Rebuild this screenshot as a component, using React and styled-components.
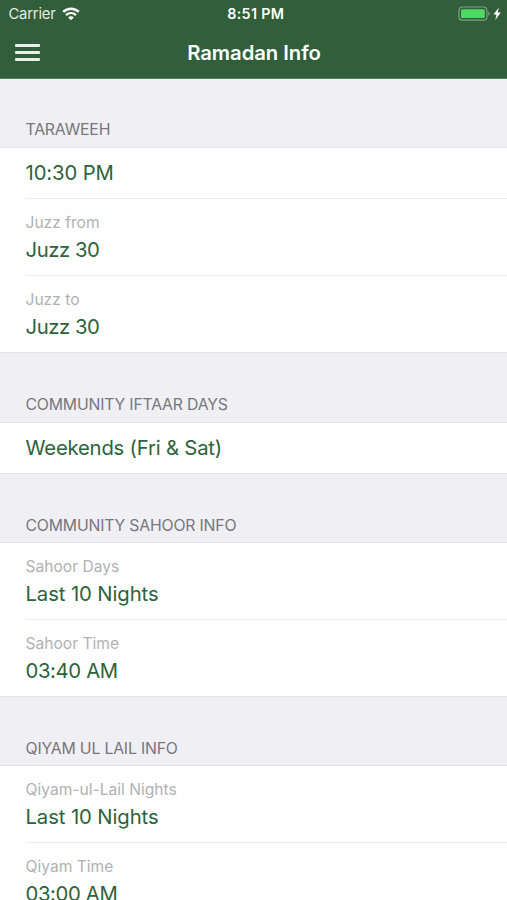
import React from "react";
import styled, { createGlobalStyle } from "styled-components";

const sections = [
  {
    title: "TARAWEEH",
    height: 69,
    rows: [
      { value: "10:30 PM", height: 51, tracking: -0.12 },
      { label: "Juzz from", value: "Juzz 30", height: 77, tracking: -0.45 },
      { label: "Juzz to", value: "Juzz 30", height: 77, tracking: -0.45 }
    ]
  },
  {
    title: "COMMUNITY IFTAAR DAYS",
    height: 70,
    rows: [{ value: "Weekends (Fri & Sat)", height: 51, tracking: -0.2 }]
  },
  {
    title: "COMMUNITY SAHOOR INFO",
    height: 69,
    bottom: 6,
    rows: [
      { label: "Sahoor Days", value: "Last 10 Nights", height: 77, tracking: -0.1 },
      { label: "Sahoor Time", value: "03:40 AM", height: 77, tracking: -0.35 }
    ]
  },
  {
    title: "QIYAM UL LAIL INFO",
    height: 69,
    bottom: 6,
    rows: [
      { label: "Qiyam-ul-Lail Nights", value: "Last 10 Nights", height: 77, tracking: -0.1 },
      { label: "Qiyam Time", value: "03:00 AM", height: 77, tracking: -0.35 }
    ]
  }
];

const WifiIcon = () => (
  <svg width="18" height="14" viewBox="0 0 18 14" fill="none" stroke="#fff">
    <path d="M1.2 4.9C5.6.6 12.4.6 16.8 4.9" strokeWidth="2.5" />
    <path d="M4 8.1c2.9-2.7 7.1-2.7 10 0" strokeWidth="2.3" />
    <path d="M9 13.3 6.1 10.4c1.6-1.5 4.2-1.5 5.8 0z" fill="#fff" stroke="none" />
  </svg>
);

const BatteryIcon = () => (
  <svg width="44" height="16" viewBox="0 0 44 16">
    <rect x="0.9" y="1" width="28" height="13.2" rx="3.2" fill="none" stroke="#7f9f84" strokeWidth="1.2" />
    <rect x="3" y="3.2" width="23.8" height="8.8" rx="1" fill="#4cd964" />
    <path d="M30.3 5.4c1.9.7 1.9 3.7 0 4.4z" fill="#7f9f84" />
    <path d="M40.9 1.4 35.5 8.4h3L37.3 14l5.5-7.4h-3.2z" fill="#fff" />
  </svg>
);

const App = () => (
  <>
    <GlobalStyle />
    <Screen>
      <Header>
        <StatusBar>
          <Carrier>
            <span>Carrier</span>
            <WifiIcon />
          </Carrier>
          <Clock>8:51 PM</Clock>
          <Power>
            <BatteryIcon />
          </Power>
        </StatusBar>
        <NavBar>
          <MenuButton aria-label="Menu">
            <MenuLine />
            <MenuLine />
            <MenuLine />
          </MenuButton>
          <Title>Ramadan Info</Title>
        </NavBar>
      </Header>
      {sections.map(({ title, height, bottom, rows }) => (
        <section key={title}>
          <SectionTitle $height={height} $bottom={bottom}>
            {title}
          </SectionTitle>
          <List>
            {rows.map(row => (
              <Row key={row.label || row.value} $height={row.height}>
                {row.label && <Label>{row.label}</Label>}
                <Value $tracking={row.tracking}>{row.value}</Value>
              </Row>
            ))}
          </List>
        </section>
      ))}
    </Screen>
  </>
);
export default App;

const GlobalStyle = createGlobalStyle`
  body {
    margin: 0;
    background: #efeff4;
    font-family: Inter, "Liberation Sans", sans-serif;
  }
`;
const Screen = styled.main`
  width: 100%;
  height: 900px;
  overflow: hidden;
`;
const Header = styled.header`
  height: 79px;
  box-sizing: border-box;
  background-color: #305f3a;
  border-bottom: 1px solid #57795d;
  color: #fff;
`;
const StatusBar = styled.div`
  height: 27px;
  display: grid;
  grid-template-columns: 1fr auto 1fr;
  align-items: center;
  padding: 0 5px 0 8.5px;
  box-sizing: border-box;
`;
const Carrier = styled.div`
  display: flex;
  align-items: center;
  gap: 6px;
  font-size: 14.8px;
  letter-spacing: -0.2px;
  color: #e4ece4;
`;
const Clock = styled.div`
  padding-left: 1px;
  font-size: 14.3px;
  font-weight: 600;
  letter-spacing: 0.3px;
  line-height: 27px;
`;
const Power = styled.div`
  display: flex;
  justify-content: flex-end;
`;
const NavBar = styled.div`
  height: 51px;
  display: grid;
  grid-template-columns: 57px 1fr 56px;
  align-items: center;
`;
const MenuButton = styled.button`
  display: flex;
  flex-direction: column;
  gap: 4px;
  width: 25px;
  margin-left: 15.3px;
  padding: 0;
  border: none;
  background: none;
`;
const MenuLine = styled.span`
  width: 25px;
  height: 3px;
  border-radius: 1px;
  background-color: #e9f0ea;
`;
const Title = styled.h1`
  margin: 0;
  font-size: 20.3px;
  font-weight: 600;
  letter-spacing: -0.05px;
  text-align: center;
`;
const SectionTitle = styled.h2`
  height: ${({ $height }) => $height}px;
  box-sizing: border-box;
  display: flex;
  align-items: flex-end;
  margin: 0;
  padding: 0 25.5px ${({ $bottom = 7 }) => $bottom}px;
  border-bottom: 1px solid #e5e5e9;
  color: #77777c;
  font-size: 15.8px;
  font-weight: 400;
  letter-spacing: -0.19px;
  line-height: 20px;
`;
const List = styled.div`
  background-color: #fff;
  border-bottom: 1px solid #e5e5e9;
`;
const Row = styled.div`
  height: ${({ $height }) => $height}px;
  box-sizing: border-box;
  display: flex;
  flex-direction: column;
  justify-content: flex-end;
  gap: 3px;
  margin-left: 25.5px;
  padding-bottom: 11px;
  border-bottom: 1px solid #ececee;

  &:last-child {
    height: ${({ $height }) => $height - 1}px;
    border-bottom: none;
  }
`;
const Label = styled.div`
  color: #b1b1b3;
  font-size: 15.6px;
  line-height: 20px;
`;
const Value = styled.div`
  color: #2c623c;
  font-size: 20.3px;
  letter-spacing: ${({ $tracking }) => $tracking}px;
  line-height: 28px;
`;
